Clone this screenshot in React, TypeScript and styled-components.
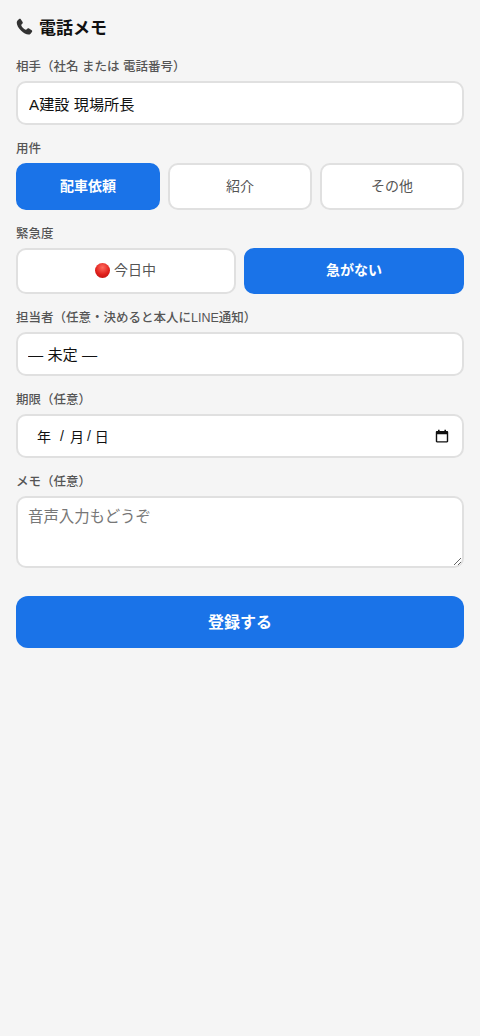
import { useState } from "react";
import styled, { createGlobalStyle } from "styled-components";

const FONT = `"Liberation Sans", "Noto Sans CJK JP", sans-serif`;

const App = () => {
  const [kind, setKind] = useState("配車依頼");
  const [urgent, setUrgent] = useState("急がない");

  return (
    <Page>
      <GlobalStyle />
      <Title>
        <PhoneIcon viewBox="0 0 24 24">
          <path d="M5.2 2.6c.7-.5 1.6-.4 2.1.3l2.3 3.3c.4.6.4 1.4-.1 1.9L8.2 9.600c-.3.3-.3.7-.2 1 .6 1.300 1.300 2.300 2.200 3.200.9.9 1.900 1.600 3.200 2.200.3.100.7.100 1-.2l1.500-1.300c.5-.5 1.300-.5 1.900-.1l3.300 2.300c.7.500.8 1.400.3 2.100-.9 1.300-2.200 3.400-4.300 3.400-2.900 0-6.500-1.900-9.300-4.700C4.400 14.100 2.200 10.200 2.200 7.300c0-2.100 1.700-3.800 3-4.700z" />
        </PhoneIcon>
        電話メモ
      </Title>

      <Field>
        <Label>相手（社名 または 電話番号）</Label>
        <TextInput defaultValue="A建設 現場所長" />
      </Field>

      <Field>
        <Label>用件</Label>
        <ButtonRow>
          {["配車依頼", "紹介", "その他"].map((item) => (
            <Choice
              key={item}
              type="button"
              $active={kind === item}
              onClick={() => setKind(item)}
            >
              {item}
            </Choice>
          ))}
        </ButtonRow>
      </Field>

      <Field>
        <Label>緊急度</Label>
        <ButtonRow>
          <Choice
            type="button"
            $active={urgent === "今日中"}
            onClick={() => setUrgent("今日中")}
          >
            <RedDot />
            今日中
          </Choice>
          <Choice
            type="button"
            $active={urgent === "急がない"}
            onClick={() => setUrgent("急がない")}
          >
            急がない
          </Choice>
        </ButtonRow>
      </Field>

      <Field>
        <Label>担当者（任意・決めると本人にLINE通知）</Label>
        <SelectBox defaultValue="">
          <option value="">— 未定 —</option>
        </SelectBox>
      </Field>

      <Field>
        <Label>期限（任意）</Label>
        <DateBox>
          <DateText>
            <DatePart>年</DatePart>
            <DateSlash $wide>/</DateSlash>
            <DatePart>月</DatePart>
            <DateSlash>/</DateSlash>
            <DatePart>日</DatePart>
          </DateText>
          <CalendarIcon viewBox="0 0 14 14">
            <path d="M3 .8h1.600v1.200h4.800V.8H11V2h1c.7 0 1.200.5 1.200 1.200v9c0 .7-.5 1.200-1.200 1.200H2c-.7 0-1.200-.5-1.200-1.200v-9C.8 2.500 1.300 2 2 2h1V.8zM2.200 5.200v6.900c0 .1.100.2.200.2h9.200c.1 0 .2-.1.200-.2V5.200H2.200z" />
          </CalendarIcon>
        </DateBox>
      </Field>

      <Field>
        <Label>メモ（任意）</Label>
        <MemoArea placeholder="音声入力もどうぞ" />
      </Field>

      <SubmitButton type="button">登録する</SubmitButton>
    </Page>
  );
};
export default App;

const GlobalStyle = createGlobalStyle`
  html, body {
    margin: 0;
    padding: 0;
    background: #f5f5f5;
  }
  * {
    box-sizing: border-box;
  }
`;

const Page = styled.div`
  min-height: 1036px;
  padding: 14px 16px 0;
  background: #f5f5f5;
  font-family: ${FONT};
  color: #111;
`;

const Title = styled.h1`
  display: flex;
  align-items: center;
  gap: 5px;
  margin: 0 0 19px;
  height: 24px;
  font-size: 17px;
  font-weight: 700;
  color: #111;
`;

const PhoneIcon = styled.svg`
  width: 19px;
  height: 19px;
  margin-left: -1px;
  fill: #333;
`;

const Field = styled.div`
  margin-bottom: 14px;
`;

const Label = styled.div`
  height: 18px;
  margin-bottom: 6px;
  font-size: 12.5px;
  line-height: 21px;
  font-weight: 500;
  color: #555;
`;

const inputBase = `
  display: block;
  width: 100%;
  border: 2px solid #e0e0e0;
  border-radius: 10px;
  background: #fff;
  font-family: ${FONT};
  font-size: 15.2px;
  color: #111;
  outline: none;
`;

const TextInput = styled.input`
  ${inputBase}
  height: 44px;
  padding: 0 11px;
`;

const SelectBox = styled.select`
  ${inputBase}
  height: 44px;
  padding: 0 10px;
  appearance: none;
`;

const DateBox = styled.div`
  ${inputBase}
  display: flex;
  align-items: center;
  justify-content: space-between;
  height: 44px;
  padding: 0 13px 0 19px;
`;

const DateText = styled.div`
  display: flex;
  align-items: center;
  font-size: 14px;
`;

const DatePart = styled.span`
  width: 14px;
`;

const DateSlash = styled.span<{ $wide?: boolean }>`
  margin: 0 ${(p) => (p.$wide ? "6px" : "4px")} 0 ${(p) => (p.$wide ? "9px" : "3px")};
`;

const CalendarIcon = styled.svg`
  width: 14px;
  height: 14px;
  fill: #111;
`;

const MemoArea = styled.textarea`
  ${inputBase}
  height: 72px;
  padding: 8px 10px;
  font-size: 15.4px;
  line-height: 22px;
  resize: vertical;
  &::placeholder {
    color: #777;
  }
`;

const ButtonRow = styled.div`
  display: flex;
  gap: 8px;
`;

const Choice = styled.button<{ $active: boolean }>`
  display: flex;
  flex: 1;
  align-items: center;
  justify-content: center;
  height: 46.5px;
  padding: 0 0 3px;
  border: 2px solid ${(p) => (p.$active ? "#1a73e8" : "#e0e0e0")};
  border-radius: 10px;
  background: ${(p) => (p.$active ? "#1a73e8" : "#fff")};
  color: ${(p) => (p.$active ? "#fff" : "#555")};
  font-family: ${FONT};
  font-size: 14px;
  font-weight: ${(p) => (p.$active ? 700 : 400)};
  cursor: pointer;
`;

const RedDot = styled.span`
  width: 15px;
  height: 15px;
  margin: 2px 4px 0 -1px;
  border-radius: 50%;
  background: radial-gradient(circle at 50% 30%, #ff6b5e, #e0201c 55%, #b3100f);
`;

const SubmitButton = styled.button`
  display: block;
  width: 100%;
  height: 52px;
  margin-top: 28px;
  padding: 0 0 3px;
  border: none;
  border-radius: 12px;
  background: #1a73e8;
  color: #fff;
  font-family: ${FONT};
  font-size: 16px;
  font-weight: 700;
  cursor: pointer;
`;
